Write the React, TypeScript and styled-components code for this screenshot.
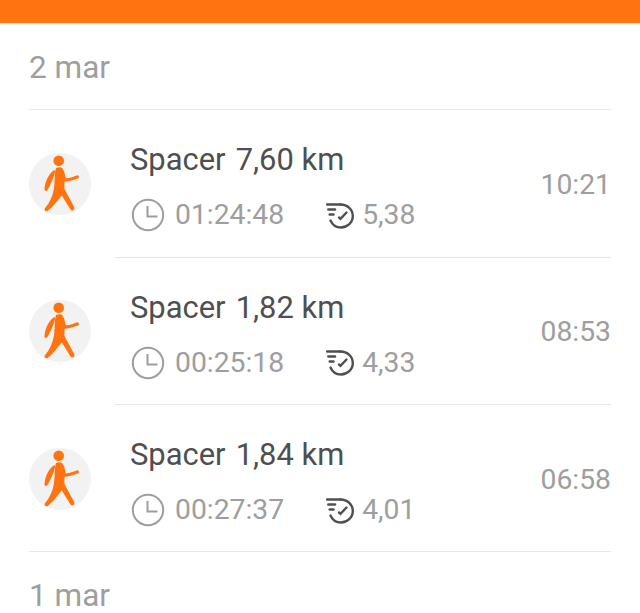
import React from "react";
import styled, { createGlobalStyle } from "styled-components";

const Global = createGlobalStyle`
  html, body { margin: 0; padding: 0; background: #fff; overflow: hidden; }
  body { font-family: Roboto, "Liberation Sans", sans-serif; }
`;

const Page = styled.div`
  width: 640px;
  height: 613px;
  overflow: hidden;
  background: #fff;
`;

const TopBar = styled.div`
  height: 23px;
  background: #ff7410;
  border-bottom: 1px solid #ffe9d8;
  box-sizing: content-box;
  margin-bottom: -1px;
`;

const DateHeader = styled.div`
  margin: 0 29px;
  height: 87px;
  box-sizing: border-box;
  padding-top: 25px;
  font-size: 31.500px;
  line-height: 40px;
  color: #9e9e9e;
  border-bottom: 1px solid #e8e8e8;
`;

const LastDate = styled(DateHeader)`
  border-bottom: none;
  padding-top: 24px;
`;

const Row = styled.div`
  display: flex;
  height: 147.500px;
  padding: 0 29px;
  align-items: stretch;
`;

const LastRow = styled(Row)`
  height: 146px;
`;

const Avatar = styled.div`
  flex: none;
  width: 62px;
  height: 62px;
  margin-top: 42.800px;
  border-radius: 50%;
  background: #f2f2f2;
  display: flex;
  align-items: center;
  justify-content: center;
`;

const Body = styled.div`
  flex: 1;
  margin-left: 24px;
  padding-left: 15px;
  display: flex;
  align-items: center;
  justify-content: space-between;
  border-bottom: 1px solid #e8e8e8;
  box-sizing: border-box;
`;

const LastBody = styled(Body)`
  border-bottom: none;
`;

const Info = styled.div`
  display: flex;
  flex-direction: column;
  align-self: flex-start;
  padding-top: 30px;
`;

const Title = styled.div`
  font-size: 30.900px;
  line-height: 40px;
  color: #4f4f4f;
  white-space: nowrap;
`;

const Distance = styled.span`
  margin-left: 2.500px;
`;

const Stats = styled.div`
  display: flex;
  align-items: center;
  margin-top: 18px;
  font-size: 28.300px;
  line-height: 34px;
  color: #9e9e9e;
`;

const ClockStat = styled.div`
  display: flex;
  align-items: center;
  gap: 10px;
  margin-left: 1px;
  margin-right: 42px;
`;

const PaceStat = styled.div`
  display: flex;
  align-items: center;
  gap: 8px;
`;

const Time = styled.div`
  font-size: 28.300px;
  line-height: 34px;
  color: #9e9e9e;
  margin-top: 3px;
`;

const FullDivider = styled.div`
  margin: 0 29px;
  height: 1px;
  background: #e8e8e8;
`;

const Walker = () => (
  <svg width="62" height="62" viewBox="0 0 62 62" fill="#ff7410">
    <circle cx="29.700" cy="7.800" r="5.300" />
    <path d="M27 15C29 13.800 32.500 13.800 33.500 15.500C35 18 35.500 24 35.500 29C35.500 32 35.300 34 35.500 36L45.300 54.200C46.400 56.800 43 58.600 41.500 56.400L32.800 42.500C28 48.500 24 53.500 19 57.800C17 59.400 14.500 57 16.200 55C21 49 24 42.500 25 35C26 28 25.500 19 27 15Z" />
    <path
      d="M33.500 19L35.500 27C40 27 44.500 25.500 48.300 24"
      fill="none"
      stroke="#ff7410"
      strokeWidth="3.400"
      strokeLinecap="round"
      strokeLinejoin="round"
    />
    <path d="M24.500 17.500C25.500 16.800 26.500 17.800 26.200 19C24.500 25 22 31 18.500 37C17.400 38.600 15.200 38 15.500 36C16 29 19 22 24.500 17.500Z" />
  </svg>
);

const Clock = () => (
  <svg width="34" height="34" viewBox="0 0 34 34" fill="none" stroke="#9e9e9e" strokeWidth="2">
    <circle cx="17" cy="17" r="15.200" />
    <path d="M16.500 8V18.500H26.500" />
  </svg>
);

const Pace = () => (
  <svg width="28" height="27" viewBox="0 0 28 27" fill="none" stroke="#4f4f4f" strokeWidth="2.400" strokeLinecap="round">
    <path d="M1 2.500H14.500" />
    <path d="M2.300 7.500H9" />
    <path d="M3.700 12.500H7.500" />
    <path d="M14.500 2.500C21.500 2.500 26.800 7.500 26.800 14C26.800 20.500 21.300 25.500 15 25.500C10 25.500 6.300 22.700 4.500 18.500" />
    <path d="M13 15.500L14.500 16.800L20.500 10.500" />
  </svg>
);

type Activity = { km: string; dur: string; pace: string; time: string };

const activities: Activity[] = [
  { km: "7,60", dur: "01:24:48", pace: "5,38", time: "10:21" },
  { km: "1,82", dur: "00:25:18", pace: "4,33", time: "08:53" },
  { km: "1,84", dur: "00:27:37", pace: "4,01", time: "06:58" },
];

export default function App() {
  return (
    <Page>
      <Global />
      <TopBar />
      <DateHeader>2 mar</DateHeader>
      {activities.map((a, i) => {
        const last = i === activities.length - 1;
        const Wrap = last ? LastBody : Body;
        const RowEl = last ? LastRow : Row;
        return (
          <RowEl key={a.time}>
            <Avatar>
              <Walker />
            </Avatar>
            <Wrap>
              <Info>
                <Title>
                  Spacer <Distance>{a.km} km</Distance>
                </Title>
                <Stats>
                  <ClockStat>
                    <Clock />
                    {a.dur}
                  </ClockStat>
                  <PaceStat>
                    <Pace />
                    {a.pace}
                  </PaceStat>
                </Stats>
              </Info>
              <Time>{a.time}</Time>
            </Wrap>
          </RowEl>
        );
      })}
      <FullDivider />
      <LastDate>1 mar</LastDate>
    </Page>
  );
}
